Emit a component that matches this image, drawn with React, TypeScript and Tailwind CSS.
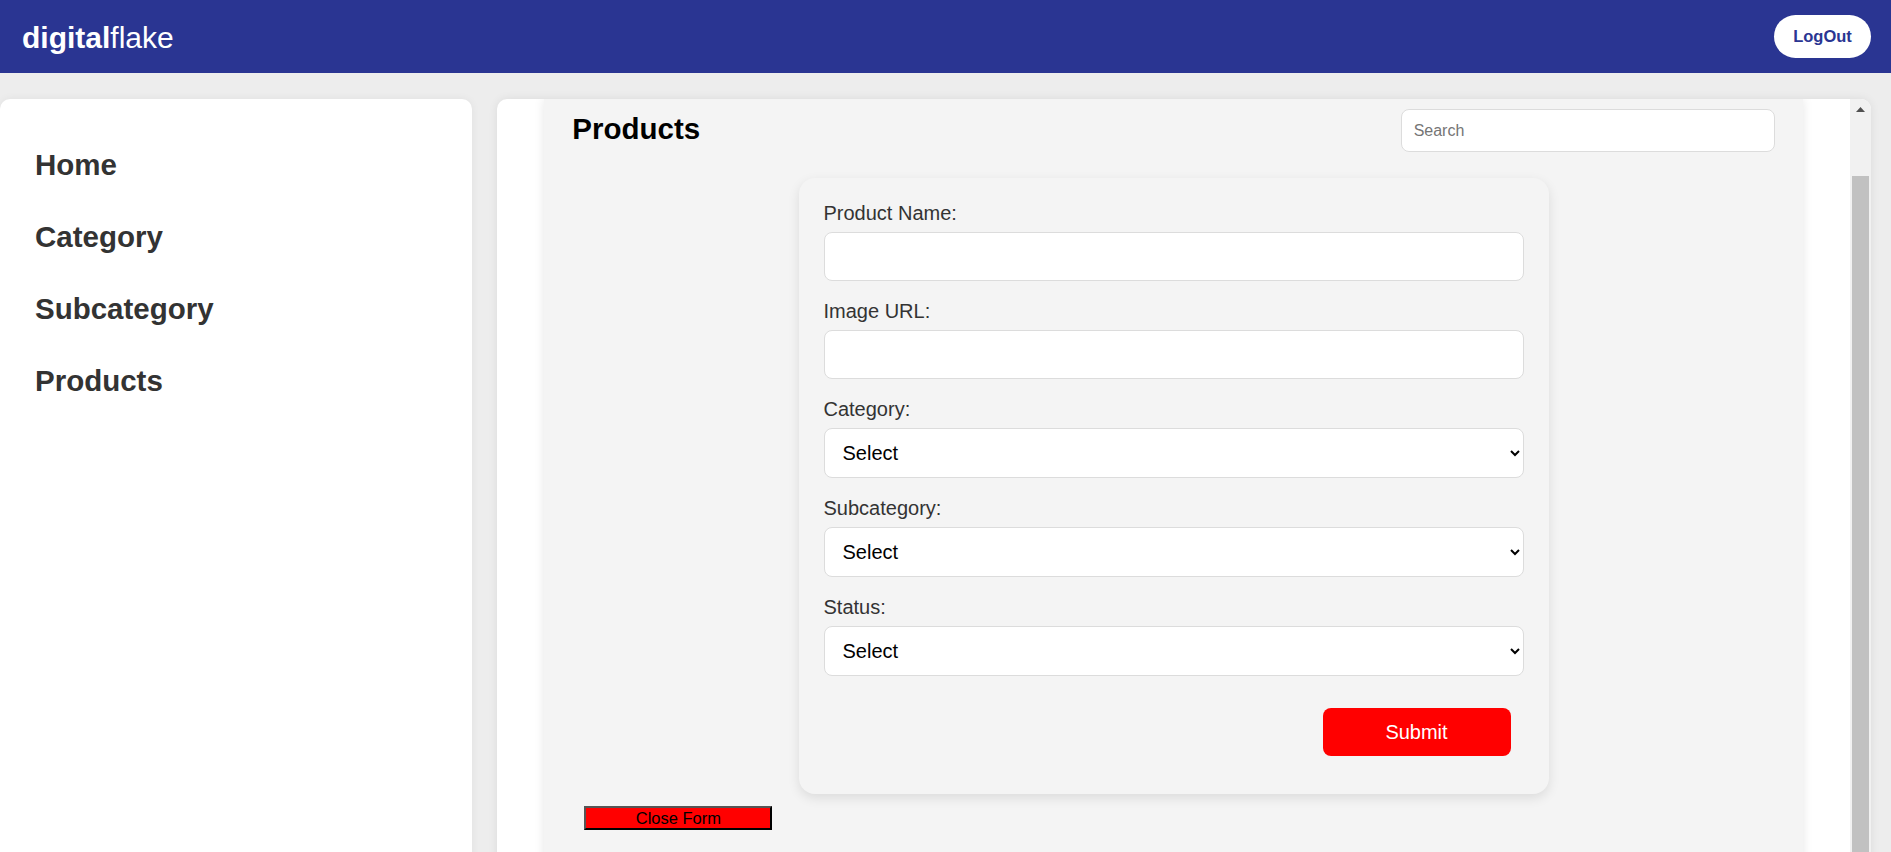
import { useState } from "react";

const navItems = ["Home", "Category", "Subcategory", "Products"];

const Field = ({ label, children }: { label: string; children: React.ReactNode }) => (
    <div className="flex flex-col">
        <label className="text-[20px] leading-[23px] text-[#333] mb-[7px]">{label}</label>
        {children}
    </div>
);

const SelectBox = () => (
    <select className="h-[50px] w-full bg-white border border-[#dcdcdc] rounded-[8px] pl-[14px] pr-[6px] text-[20px] text-black mb-[19px]">
        <option>Select</option>
    </select>
);

const App = () => {
    const [name, setName] = useState("");
    const [url, setUrl] = useState("");

    return (
        <div className="h-[852px] overflow-hidden bg-[#ededed] font-['Liberation_Sans',Arial,sans-serif]">
            <header className="h-[73px] bg-[#2a3592] flex items-center justify-between pl-[22px] pr-[20px]">
                <div className="text-[30px] text-white leading-none mt-[2px]">
                    <span className="font-bold">digital</span>flake
                </div>
                <button className="h-[43px] w-[97px] rounded-full bg-white text-[#2a3592] font-bold text-[16.5px]">LogOut</button>
            </header>

            <div className="flex gap-[25px] pt-[26px] pr-[20px]">
                <aside className="w-[472px] shrink-0 h-[780px] bg-white rounded-[10px] shadow-[0_0_8px_rgba(0,0,0,0.06)] pt-[49px] pl-[35px]">
                    <nav className="flex flex-col gap-[38px]">
                        {navItems.map((item) => (
                            <a key={item} className="text-[29.5px] leading-[34px] font-bold text-[#333] cursor-pointer">{item}</a>
                        ))}
                    </nav>
                </aside>

                <main className="flex-1 h-[780px] bg-white rounded-[10px] shadow-[0_0_10px_rgba(0,0,0,0.08)] flex overflow-hidden">
                    <div className="flex-1 min-w-0">
                        <div className="w-[93%] mx-auto bg-[#f4f4f4] shadow-[0_0_10px_rgba(0,0,0,0.1)] h-full">
                            <div className="flex justify-between items-start pt-[10px] pl-[28px] pr-[28px]">
                                <h2 className="mt-[3px] text-[29.5px] leading-[34px] font-bold text-black">Products</h2>
                                <input
                                    placeholder="Search"
                                    className="w-[374px] h-[43px] bg-white border border-[#dcdcdc] rounded-[8px] px-[12px] text-[16px] placeholder:text-[#757575] outline-none"
                                />
                            </div>

                            <form className="w-[750px] mx-auto mt-[26px] bg-[#f4f4f4] rounded-[16px] shadow-[0_4px_12px_rgba(0,0,0,0.1)] pt-[24px] px-[25px] pb-[38px]">
                                <Field label="Product Name:">
                                    <input value={name} onChange={(e) => setName(e.target.value)} className="h-[49px] w-full bg-white border border-[#dcdcdc] rounded-[8px] px-[12px] text-[20px] mb-[19px] outline-none" />
                                </Field>
                                <Field label="Image URL:">
                                    <input value={url} onChange={(e) => setUrl(e.target.value)} className="h-[49px] w-full bg-white border border-[#dcdcdc] rounded-[8px] px-[12px] text-[20px] mb-[19px] outline-none" />
                                </Field>
                                <Field label="Category:">
                                    <SelectBox />
                                </Field>
                                <Field label="Subcategory:">
                                    <SelectBox />
                                </Field>
                                <Field label="Status:">
                                    <SelectBox />
                                </Field>
                                <div className="flex justify-end pr-[13px] mt-[13px]">
                                    <button type="button" className="w-[188px] h-[48px] bg-[#ff0000] rounded-[8px] text-white text-[20px]">Submit</button>
                                </div>
                            </form>

                            <button className="ml-[40px] mt-[12px] w-[188px] h-[24px] bg-[#ff0000] border-2 border-t-[#555] border-l-[#555] border-r-black border-b-black text-black text-[16.5px] leading-none">
                                Close Form
                            </button>
                        </div>
                    </div>

                    <div className="w-[21px] shrink-0 bg-[#f1f1f1] flex flex-col items-center">
                        <div className="h-[21px] w-full flex items-center justify-center">
                            <svg width="9" height="5" viewBox="0 0 9 5">
                                <polygon points="4.5,0 9,5 0,5" fill="#505050" />
                            </svg>
                        </div>
                        <div className="mt-[56px] w-[17px] flex-1 bg-[#c1c1c1]" />
                    </div>
                </main>
            </div>
        </div>
    );
};

export default App;
